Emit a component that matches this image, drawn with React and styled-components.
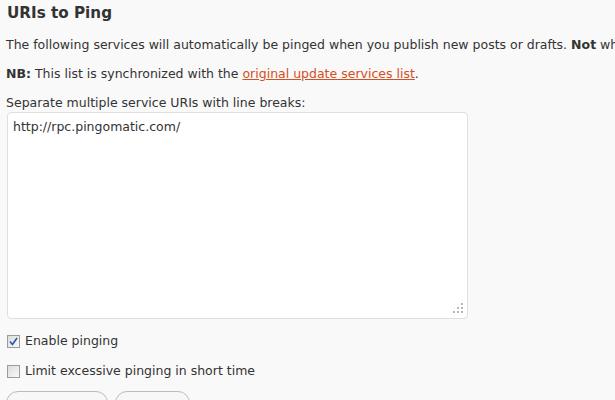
import React from "react";
import styled, { createGlobalStyle } from "styled-components";

const GlobalStyle = createGlobalStyle`
	html, body {
		margin: 0;
		padding: 0;
		background: #f9f9f9;
		overflow: hidden;
	}
	body {
		font-family: "DejaVu Sans", Verdana, sans-serif;
		font-size: 12.5px;
		color: #333;
	}
`;

const Page = styled.div`
	width: 615px;
	height: 400px;
	padding: 0 0 0 6px;
	box-sizing: border-box;
	white-space: nowrap;
	overflow: hidden;
`;

const Title = styled.h3`
	margin: 0;
	padding: 3px 0 0 1px;
	font-size: 15.2px;
	font-weight: bold;
	color: #333;
	line-height: 20px;
`;

const Text = styled.p`
	margin: ${(props) => props.$top || 0}px 0 0;
	line-height: 17px;
`;

const Link = styled.a`
	color: #d54e21;
	text-decoration: underline;
`;

const FieldWrap = styled.div`
	position: relative;
	width: 461px;
	margin: 1px 0 0 1px;
`;

const Field = styled.textarea`
	display: block;
	width: 100%;
	height: 207px;
	padding: 6px 5px;
	box-sizing: border-box;
	border: 1px solid #dfdfdf;
	border-radius: 4px;
	background: #fff;
	font-family: "DejaVu Sans", Verdana, sans-serif;
	font-size: 12.5px;
	color: #333;
	resize: none;
	outline: none;
`;

const Grip = styled.svg`
	position: absolute;
	right: 5px;
	bottom: 6px;
	display: block;
`;

const Options = styled.div`
	display: flex;
	flex-direction: column;
	gap: 12px;
	margin-top: 13px;
`;

const Option = styled.label`
	display: flex;
	align-items: center;
	gap: 5px;
	line-height: 18px;
`;

const Box = styled.span`
	width: 11px;
	height: 11px;
	margin-left: 1px;
	border: 1px solid #9c9c9c;
	background: linear-gradient(135deg, #dcdcdc, #f8f8f8);
	display: flex;
	align-items: center;
	justify-content: center;
	svg {
		display: block;
	}
`;

const Buttons = styled.div`
	display: flex;
	gap: 7px;
	margin-top: 11px;
`;

const Button = styled.button`
	width: ${(props) => props.$w}px;
	height: 30px;
	border: 1px solid #bbb;
	border-radius: 12px;
	background: #f7f7f7;
	font-family: "DejaVu Sans", Verdana, sans-serif;
	font-size: 11px;
	color: #464646;
	padding: 0;
`;

function Checkbox({ checked }) {
	return (
		<Box>
			{checked && (
				<svg width="9" height="9" viewBox="0 0 9 9">
					<path d="M1 4.5 L3.5 7.5 L8 1" fill="none" stroke="#2a54a8" strokeWidth="1.6" />
				</svg>
			)}
		</Box>
	);
}

// dotted resize grip in the bottom-right corner of the textarea
function ResizeGrip() {
	const dots = [
		[8, 0],
		[4, 4],
		[8, 4],
		[0, 8],
		[4, 8],
		[8, 8],
	];
	return (
		<Grip width="10" height="10" viewBox="0 0 10 10">
			{dots.map(([x, y]) => (
				<rect key={`${x}-${y}`} x={x} y={y} width="2" height="2" fill="#b5b5b5" />
			))}
		</Grip>
	);
}

export default function App() {
	return (
		<>
			<GlobalStyle />
			<Page>
				<Title>URIs to Ping</Title>
				<Text $top={13}>
					The following services will automatically be pinged when you publish new posts or drafts.{" "}
					<b>Not</b> when you update them.
				</Text>
				<Text $top={12}>
					<b>NB:</b> This list is synchronized with the <Link href="#">original update services list</Link>.
				</Text>
				<Text $top={12}>Separate multiple service URIs with line breaks:</Text>
				<FieldWrap>
					<Field defaultValue="http://rpc.pingomatic.com/" />
					<ResizeGrip />
				</FieldWrap>
				<Options>
					<Option>
						<Checkbox checked />
						Enable pinging
					</Option>
					<Option>
						<Checkbox />
						Limit excessive pinging in short time
					</Option>
				</Options>
				<Buttons>
					<Button $w={102}>Save Changes</Button>
					<Button $w={75}>Cancel</Button>
				</Buttons>
			</Page>
		</>
	);
}
